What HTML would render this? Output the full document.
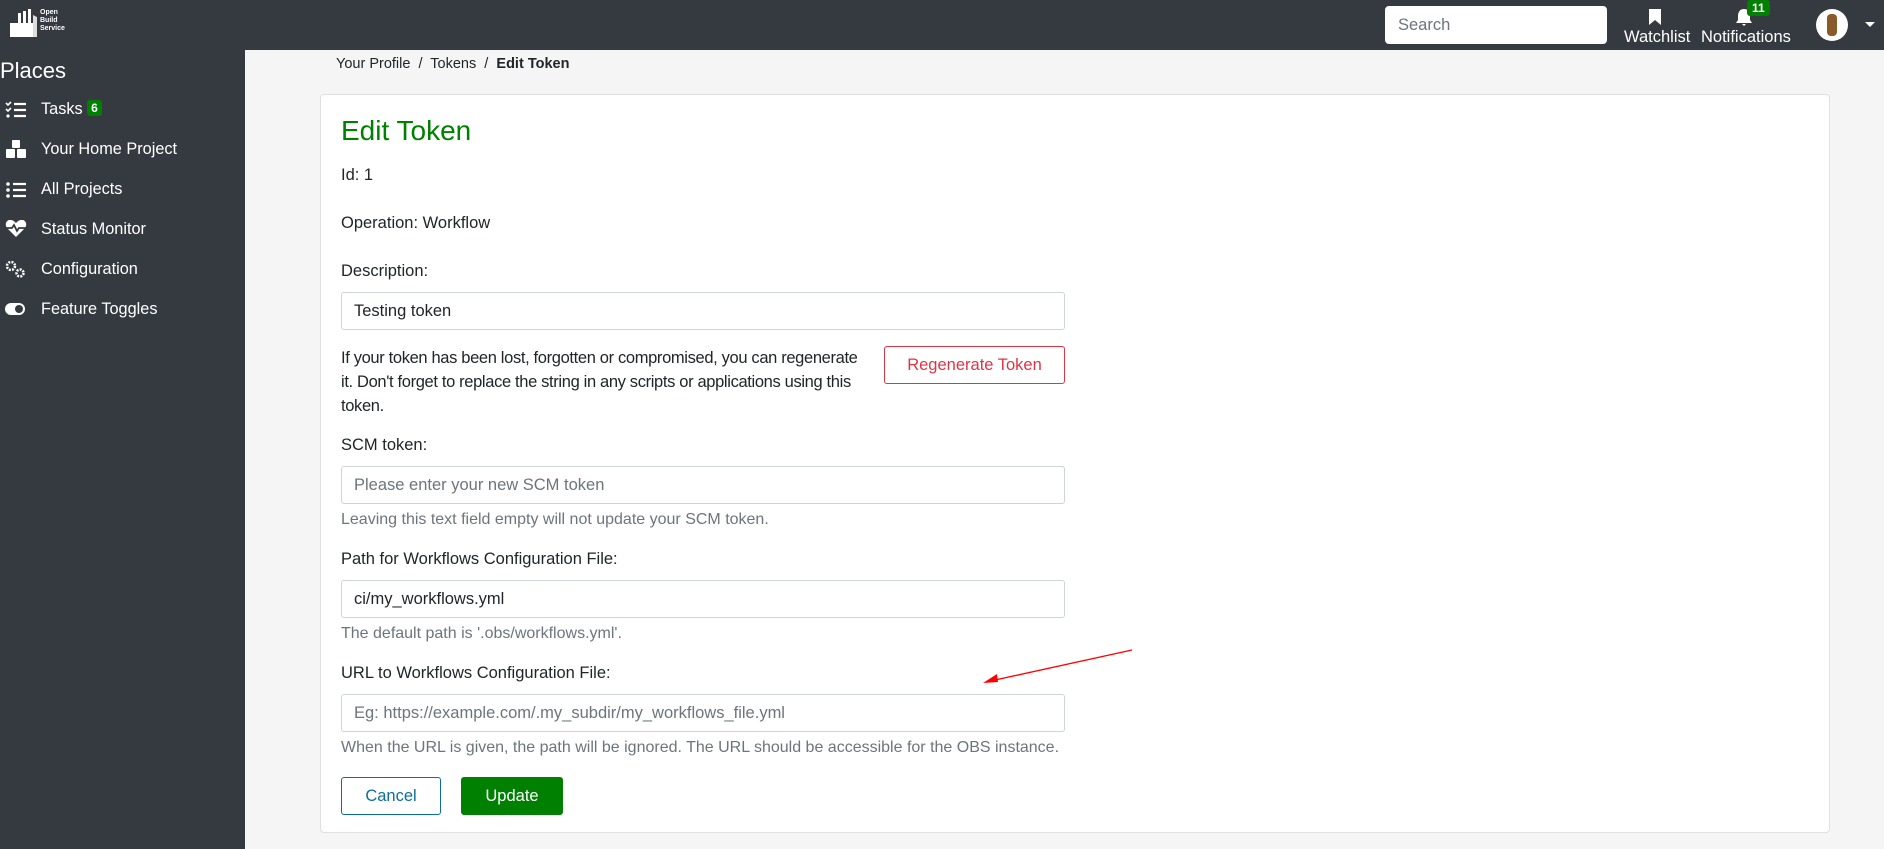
<!DOCTYPE html>
<html><head><meta charset="utf-8"><style>
*{box-sizing:border-box;margin:0;padding:0}
body{width:1884px;height:849px;overflow:hidden;background:#f5f5f5;font-family:"Liberation Sans",sans-serif;color:#212529;position:relative;font-size:16.5px}
.hdr{position:absolute;left:0;top:0;width:1884px;height:50px;background:#343a40}
.side{position:absolute;left:0;top:50px;width:245px;height:799px;background:#343a40;color:#fff}
.a{position:absolute}
.nav{position:absolute;left:41px;font-size:16.3px;color:#fff}
.ic{position:absolute;left:5px;width:22px;height:18px}
.card{position:absolute;left:320px;top:94px;width:1510px;height:739px;background:#fff;border:1px solid #dfdfdf;border-radius:4px}
.inp{position:absolute;left:341px;width:724px;height:38px;border:1px solid #ced4da;border-radius:3px;background:#fff;padding:0 12px;line-height:36px;font-size:16.5px}
.ph{color:#6c757d}
.help{position:absolute;left:341px;color:#6c757d;font-size:16px}
.lbl{position:absolute;left:341px;font-size:16.5px}
.btn{position:absolute;height:38px;border-radius:3px;text-align:center;line-height:36px;font-size:16.5px}
</style></head><body>
<div class="hdr">
 <svg class="a" style="left:8px;top:9px" width="42" height="28" viewBox="0 0 42 28"><path d="M2 14h8V4h3v10h2V2h3v12h2V0h3v14h2v14H2z" fill="#fff"/><path d="M25 6l4 2v20h-4z" fill="#ddd"/></svg>
 <div class="a" style="left:40px;top:9px;color:#fff;font-size:7px;line-height:8px;font-weight:bold">Open<br>Build<br>Service</div>
 <div class="a" style="left:1385px;top:6px;width:222px;height:38px;background:#fff;border-radius:4px;padding-left:13px;line-height:38px;color:#6c757d;font-size:16.5px">Search</div>
 <svg class="a" style="left:1649px;top:9px" width="12" height="16"><path d="M0 0h12v16l-6-5-6 5z" fill="#fff"/></svg>
 <div class="a" style="left:1624px;top:28px;color:#fff;font-size:16.5px">Watchlist</div>
 <svg class="a" style="left:1736px;top:9px" width="16" height="17"><path d="M8 0c4 0 6 3 6 7v4l2 3H0l2-3V7c0-4 2-7 6-7zM6 15h4l-2 2z" fill="#fff"/></svg>
 <div class="a" style="left:1747px;top:0;background:#008000;color:#fff;font-size:12px;font-weight:bold;padding:1px 5px;border-radius:3px">11</div>
 <div class="a" style="left:1701px;top:28px;color:#fff;font-size:16.5px">Notifications</div>
 <div class="a" style="left:1816px;top:9px;width:32px;height:32px;border-radius:50%;background:#fff"><div class="a" style="left:11px;top:5px;width:10px;height:22px;background:#8a5a2a;border-radius:4px"></div></div>
 <div class="a" style="left:1865px;top:22px;border-left:5px solid transparent;border-right:5px solid transparent;border-top:5px solid #fff"></div>
</div>
<div class="side">
 <div class="a" style="left:0;top:8px;font-size:22px">Places</div>
 <svg class="ic" style="top:51px" viewBox="0 0 22 18"><path d="M1 2l2 2 3-3M1 8l2 2 3-3" stroke="#fff" stroke-width="1.6" fill="none"/><circle cx="3" cy="15" r="1.6" fill="#fff"/><path d="M9 3h12M9 9h12M9 15h12" stroke="#fff" stroke-width="2.2"/></svg>
 <div class="nav" style="top:50px">Tasks <span style="background:#008000;font-size:12px;font-weight:bold;padding:1px 4px;border-radius:3px;vertical-align:2px">6</span></div>
 <svg class="ic" style="top:90px" viewBox="0 0 22 18"><rect x="7" y="0" width="8" height="8" rx="1" fill="#fff"/><rect x="1" y="9" width="9" height="9" rx="1" fill="#fff"/><rect x="12" y="9" width="9" height="9" rx="1" fill="#fff"/></svg>
 <div class="nav" style="top:90px">Your Home Project</div>
 <svg class="ic" style="top:131px" viewBox="0 0 22 18"><circle cx="3" cy="3" r="1.8" fill="#fff"/><circle cx="3" cy="9" r="1.8" fill="#fff"/><circle cx="3" cy="15" r="1.8" fill="#fff"/><path d="M8 3h13M8 9h13M8 15h13" stroke="#fff" stroke-width="2.2"/></svg>
 <div class="nav" style="top:130px">All Projects</div>
 <svg class="ic" style="top:170px" viewBox="0 0 22 18"><path d="M11 17L2 8C-1 4 2-1 6 0c2 0 4 2 5 3 1-1 3-3 5-3 4-1 7 4 4 8z" fill="#fff"/><path d="M1 8h6l2-3 3 6 2-3h7" stroke="#343a40" stroke-width="1.8" fill="none"/></svg>
 <div class="nav" style="top:170px">Status Monitor</div>
 <svg class="ic" style="top:210px" viewBox="0 0 22 18"><circle cx="6" cy="6" r="4" fill="none" stroke="#fff" stroke-width="2.5" stroke-dasharray="2 1.2"/><circle cx="15" cy="13" r="3.5" fill="none" stroke="#fff" stroke-width="2.5" stroke-dasharray="2 1.2"/></svg>
 <div class="nav" style="top:210px">Configuration</div>
 <svg class="ic" style="top:250px" viewBox="0 0 22 18"><rect x="0" y="3" width="20" height="12" rx="6" fill="#fff"/><circle cx="14" cy="9" r="4" fill="#343a40"/></svg>
 <div class="nav" style="top:250px">Feature Toggles</div>
</div>
<div class="a" style="left:336px;top:56px;font-size:14.5px;color:#212529">Your Profile &nbsp;/&nbsp; Tokens &nbsp;/&nbsp; <b>Edit Token</b></div>
<div class="card"></div>
<div class="a" style="left:341px;top:115px;font-size:28px;color:#008000">Edit Token</div>
<div class="lbl" style="top:166px">Id: 1</div>
<div class="lbl" style="top:214px">Operation: Workflow</div>
<div class="lbl" style="top:262px">Description:</div>
<div class="inp" style="top:292px">Testing token</div>
<div class="a" style="left:341px;top:346px;width:524px;line-height:24px;font-size:16.5px;letter-spacing:-0.35px">If your token has been lost, forgotten or compromised, you can regenerate it. Don't forget to replace the string in any scripts or applications using this token.</div>
<div class="btn" style="left:884px;top:346px;width:181px;border:1px solid #dc3545;color:#dc3545">Regenerate Token</div>
<div class="lbl" style="top:436px">SCM token:</div>
<div class="inp ph" style="top:466px">Please enter your new SCM token</div>
<div class="help" style="top:511px">Leaving this text field empty will not update your SCM token.</div>
<div class="lbl" style="top:550px">Path for Workflows Configuration File:</div>
<div class="inp" style="top:580px">ci/my_workflows.yml</div>
<div class="help" style="top:625px">The default path is '.obs/workflows.yml'.</div>
<div class="lbl" style="top:664px">URL to Workflows Configuration File:</div>
<div class="inp ph" style="top:694px">Eg: https://example.com/.my_subdir/my_workflows_file.yml</div>
<div class="help" style="top:739px">When the URL is given, the path will be ignored. The URL should be accessible for the OBS instance.</div>
<div class="btn" style="left:341px;top:777px;width:100px;border:1px solid #0d6e9c;color:#0d6e9c">Cancel</div>
<div class="btn" style="left:461px;top:777px;width:102px;background:#008000;border:1px solid #008000;color:#fff">Update</div>
<svg class="a" style="left:0;top:0" width="1884" height="849"><line x1="1132" y1="650" x2="995" y2="680" stroke="#f00" stroke-width="1.3"/><path d="M983 683l14-9 1 8z" fill="#f00"/></svg>
</body></html>
